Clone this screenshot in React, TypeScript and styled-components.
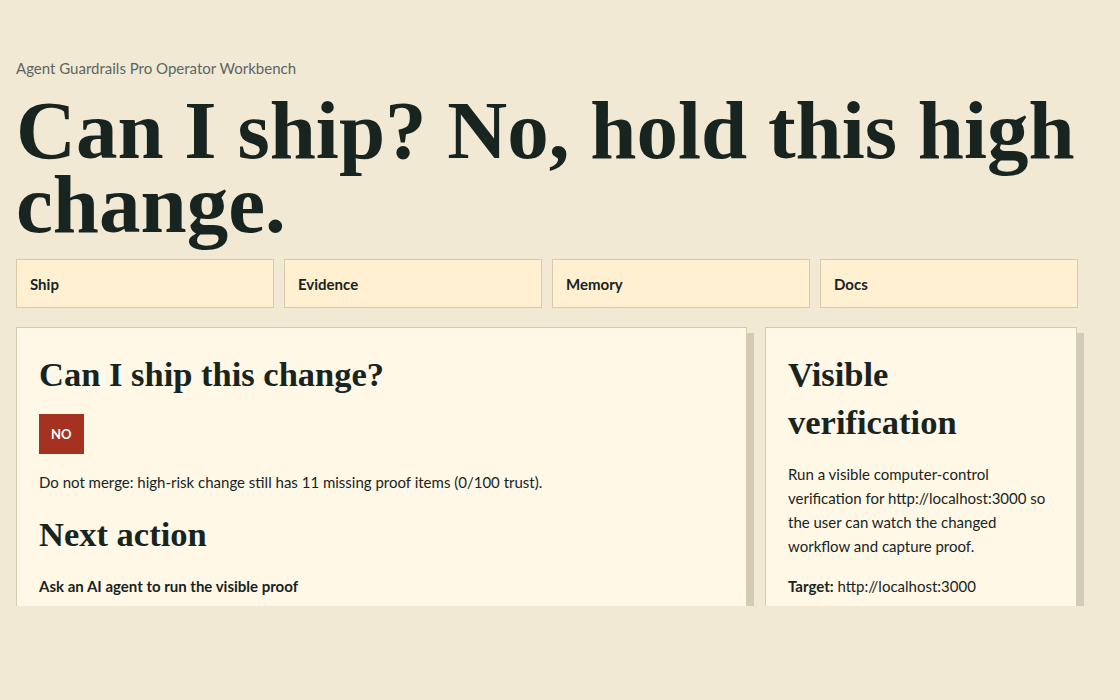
import React from "react";
import styled, { createGlobalStyle } from "styled-components";

const GlobalStyle = createGlobalStyle`
  html, body {
    margin: 0;
    padding: 0;
    background: #f2e9d4;
  }
  body {
    font-family: Lato, "Open Sans", sans-serif;
    color: #18241f;
  }
  * { box-sizing: border-box; }
`;

const Page = styled.div`
  height: 606px;
  overflow: hidden;
  padding: 57px 16px 0;
`;

const Shell = styled.div`
  width: 1062px;
`;

const Eyebrow = styled.p`
  margin: 0;
  font-size: 15px;
  line-height: 22px;
  color: #5a6662;
`;

const Title = styled.h1`
  margin: 14px 0 0;
  font-family: "Liberation Serif", "Times New Roman", serif;
  font-weight: 700;
  font-size: 83px;
  line-height: 74px;
  color: #18241f;
`;

const Tabs = styled.nav`
  margin-top: 18px;
  display: grid;
  grid-template-columns: repeat(4, 1fr);
  gap: 10px;
`;

const Tab = styled.button`
  height: 49px;
  display: flex;
  align-items: center;
  padding: 0 13px;
  background: #fff0d2;
  border: 1px solid #d8c9a8;
  font-family: inherit;
  font-size: 15px;
  font-weight: 700;
  color: #18241f;
  text-align: left;
  cursor: pointer;
`;

const Cards = styled.div`
  margin-top: 19px;
  display: grid;
  grid-template-columns: 731px 312px;
  gap: 18px;
  align-items: start;
`;

const Card = styled.section`
  background: #fff8e6;
  border: 1px solid #d6cab0;
  box-shadow: 7px 6px 0 #d4cbb6;
  padding: 22px 22px 22px 22px;
  display: flex;
  flex-direction: column;
  align-items: flex-start;
  gap: 16px;
  min-height: 320px;
`;

const CardTitle = styled.h2`
  margin: 0;
  font-family: "Liberation Serif", "Times New Roman", serif;
  font-weight: 700;
  font-size: 34.5px;
  line-height: 48px;
  color: #18241f;
`;

const Verdict = styled.span`
  display: inline-flex;
  align-items: center;
  height: 40px;
  padding: 0 12px;
  background: #a53220;
  color: #ffffff;
  font-size: 13px;
  font-weight: 700;
`;

const Text = styled.p<{ $strong?: boolean }>`
  margin: 0;
  font-size: 15px;
  line-height: 24px;
  font-weight: ${(p) => (p.$strong ? 700 : 400)};
`;

export default function App() {
  return (
    <>
      <GlobalStyle />
      <Page>
        <Shell>
          <Eyebrow>Agent Guardrails Pro Operator Workbench</Eyebrow>
          <Title>Can I ship? No, hold this high change.</Title>
          <Tabs>
            <Tab>Ship</Tab>
            <Tab>Evidence</Tab>
            <Tab>Memory</Tab>
            <Tab>Docs</Tab>
          </Tabs>
          <Cards>
            <Card>
              <CardTitle>Can I ship this change?</CardTitle>
              <Verdict>NO</Verdict>
              <Text>
                Do not merge: high-risk change still has 11 missing proof items (0/100 trust).
              </Text>
              <CardTitle>Next action</CardTitle>
              <Text $strong>Ask an AI agent to run the visible proof</Text>
            </Card>
            <Card>
              <CardTitle>Visible verification</CardTitle>
              <Text>
                Run a visible computer-control verification for http://localhost:3000 so the user
                can watch the changed workflow and capture proof.
              </Text>
              <Text>
                <strong>Target:</strong> http://localhost:3000
              </Text>
            </Card>
          </Cards>
        </Shell>
      </Page>
    </>
  );
}
